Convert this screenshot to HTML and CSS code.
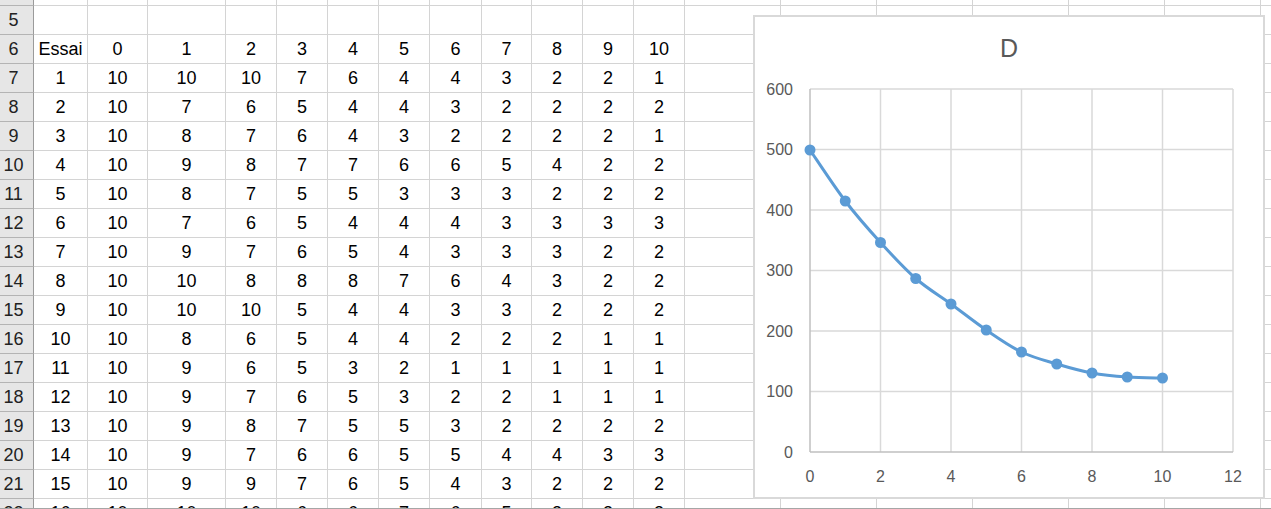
FILE: index.html
```html
<!DOCTYPE html>
<html>
  <head>
    <title>Essais - D</title>
    <link rel="stylesheet" href="styles.css">
  </head>
  <body>
    <div class="sheet">
      <div class="grid">
        <div class="row"><span class="rh"></span><span></span><span></span><span></span><span></span><span></span><span></span><span></span><span></span><span></span><span></span><span></span><span></span><span></span><span></span><span></span><span></span><span></span><span></span><span></span></div>
        <div class="row"><span class="rh">5</span><span></span><span></span><span></span><span></span><span></span><span></span><span></span><span></span><span></span><span></span><span></span><span></span><span></span><span></span><span></span><span></span><span></span><span></span><span></span></div>
        <div class="row"><span class="rh">6</span><span>Essai</span><span>0</span><span>1</span><span>2</span><span>3</span><span>4</span><span>5</span><span>6</span><span>7</span><span>8</span><span>9</span><span>10</span><span></span><span></span><span></span><span></span><span></span><span></span><span></span></div>
        <div class="row"><span class="rh">7</span><span>1</span><span>10</span><span>10</span><span>10</span><span>7</span><span>6</span><span>4</span><span>4</span><span>3</span><span>2</span><span>2</span><span>1</span><span></span><span></span><span></span><span></span><span></span><span></span><span></span></div>
        <div class="row"><span class="rh">8</span><span>2</span><span>10</span><span>7</span><span>6</span><span>5</span><span>4</span><span>4</span><span>3</span><span>2</span><span>2</span><span>2</span><span>2</span><span></span><span></span><span></span><span></span><span></span><span></span><span></span></div>
        <div class="row"><span class="rh">9</span><span>3</span><span>10</span><span>8</span><span>7</span><span>6</span><span>4</span><span>3</span><span>2</span><span>2</span><span>2</span><span>2</span><span>1</span><span></span><span></span><span></span><span></span><span></span><span></span><span></span></div>
        <div class="row"><span class="rh">10</span><span>4</span><span>10</span><span>9</span><span>8</span><span>7</span><span>7</span><span>6</span><span>6</span><span>5</span><span>4</span><span>2</span><span>2</span><span></span><span></span><span></span><span></span><span></span><span></span><span></span></div>
        <div class="row"><span class="rh">11</span><span>5</span><span>10</span><span>8</span><span>7</span><span>5</span><span>5</span><span>3</span><span>3</span><span>3</span><span>2</span><span>2</span><span>2</span><span></span><span></span><span></span><span></span><span></span><span></span><span></span></div>
        <div class="row"><span class="rh">12</span><span>6</span><span>10</span><span>7</span><span>6</span><span>5</span><span>4</span><span>4</span><span>4</span><span>3</span><span>3</span><span>3</span><span>3</span><span></span><span></span><span></span><span></span><span></span><span></span><span></span></div>
        <div class="row"><span class="rh">13</span><span>7</span><span>10</span><span>9</span><span>7</span><span>6</span><span>5</span><span>4</span><span>3</span><span>3</span><span>3</span><span>2</span><span>2</span><span></span><span></span><span></span><span></span><span></span><span></span><span></span></div>
        <div class="row"><span class="rh">14</span><span>8</span><span>10</span><span>10</span><span>8</span><span>8</span><span>8</span><span>7</span><span>6</span><span>4</span><span>3</span><span>2</span><span>2</span><span></span><span></span><span></span><span></span><span></span><span></span><span></span></div>
        <div class="row"><span class="rh">15</span><span>9</span><span>10</span><span>10</span><span>10</span><span>5</span><span>4</span><span>4</span><span>3</span><span>3</span><span>2</span><span>2</span><span>2</span><span></span><span></span><span></span><span></span><span></span><span></span><span></span></div>
        <div class="row"><span class="rh">16</span><span>10</span><span>10</span><span>8</span><span>6</span><span>5</span><span>4</span><span>4</span><span>2</span><span>2</span><span>2</span><span>1</span><span>1</span><span></span><span></span><span></span><span></span><span></span><span></span><span></span></div>
        <div class="row"><span class="rh">17</span><span>11</span><span>10</span><span>9</span><span>6</span><span>5</span><span>3</span><span>2</span><span>1</span><span>1</span><span>1</span><span>1</span><span>1</span><span></span><span></span><span></span><span></span><span></span><span></span><span></span></div>
        <div class="row"><span class="rh">18</span><span>12</span><span>10</span><span>9</span><span>7</span><span>6</span><span>5</span><span>3</span><span>2</span><span>2</span><span>1</span><span>1</span><span>1</span><span></span><span></span><span></span><span></span><span></span><span></span><span></span></div>
        <div class="row"><span class="rh">19</span><span>13</span><span>10</span><span>9</span><span>8</span><span>7</span><span>5</span><span>5</span><span>3</span><span>2</span><span>2</span><span>2</span><span>2</span><span></span><span></span><span></span><span></span><span></span><span></span><span></span></div>
        <div class="row"><span class="rh">20</span><span>14</span><span>10</span><span>9</span><span>7</span><span>6</span><span>6</span><span>5</span><span>5</span><span>4</span><span>4</span><span>3</span><span>3</span><span></span><span></span><span></span><span></span><span></span><span></span><span></span></div>
        <div class="row"><span class="rh">21</span><span>15</span><span>10</span><span>9</span><span>9</span><span>7</span><span>6</span><span>5</span><span>4</span><span>3</span><span>2</span><span>2</span><span>2</span><span></span><span></span><span></span><span></span><span></span><span></span><span></span></div>
        <div class="row"><span class="rh">22</span><span>16</span><span>10</span><span>10</span><span>10</span><span>6</span><span>6</span><span>7</span><span>6</span><span>5</span><span>3</span><span>3</span><span>3</span><span></span><span></span><span></span><span></span><span></span><span></span><span></span></div>
      </div>

      <!-- chart floats over the cells, like an Excel chart object -->
      <div class="chart">
        <svg width="508" height="480" viewBox="755 17 508 480">
          <text class="chart-title" x="1009" y="57">D</text>

          <g class="gridlines">
            <line x1="810" y1="89" x2="1233" y2="89" />
            <line x1="810" y1="149.5" x2="1233" y2="149.5" />
            <line x1="810" y1="210" x2="1233" y2="210" />
            <line x1="810" y1="270.5" x2="1233" y2="270.5" />
            <line x1="810" y1="331" x2="1233" y2="331" />
            <line x1="810" y1="391.5" x2="1233" y2="391.5" />
            <line x1="880.5" y1="89" x2="880.5" y2="452" />
            <line x1="951" y1="89" x2="951" y2="452" />
            <line x1="1021.5" y1="89" x2="1021.5" y2="452" />
            <line x1="1092" y1="89" x2="1092" y2="452" />
            <line x1="1162.5" y1="89" x2="1162.5" y2="452" />
            <line x1="1233" y1="89" x2="1233" y2="452" />
          </g>
          <g class="axes">
            <line x1="810" y1="89" x2="810" y2="452" />
            <line x1="810" y1="452" x2="1233" y2="452" />
          </g>

          <g class="y-labels">
            <text x="793" y="94.8">600</text>
            <text x="793" y="155.3">500</text>
            <text x="793" y="215.8">400</text>
            <text x="793" y="276.3">300</text>
            <text x="793" y="336.8">200</text>
            <text x="793" y="397.3">100</text>
            <text x="793" y="457.8">0</text>
          </g>
          <g class="x-labels">
            <text x="810" y="482">0</text>
            <text x="880.5" y="482">2</text>
            <text x="951" y="482">4</text>
            <text x="1021.5" y="482">6</text>
            <text x="1092" y="482">8</text>
            <text x="1162.5" y="482">10</text>
            <text x="1233" y="482">12</text>
          </g>

          <path class="series" d="M810,150 C815.88,158.5 833.5,185.58 845.25,201 C857,216.42 868.75,229.58 880.5,242.5 C892.25,255.42 904,268.25 915.75,278.5 C927.5,288.75 939.25,295.42 951,304 C962.75,312.58 974.5,322 986.25,330 C998,338 1009.75,346.33 1021.5,352 C1033.25,357.67 1045,360.5 1056.75,364 C1068.5,367.5 1080.25,370.83 1092,373 C1103.75,375.17 1115.5,376.17 1127.25,377 C1139,377.83 1156.63,377.83 1162.5,378" />
          <g class="markers">
            <circle cx="810" cy="150" r="5.5" />
            <circle cx="845.25" cy="201" r="5.5" />
            <circle cx="880.5" cy="242.5" r="5.5" />
            <circle cx="915.75" cy="278.5" r="5.5" />
            <circle cx="951" cy="304" r="5.5" />
            <circle cx="986.25" cy="330" r="5.5" />
            <circle cx="1021.5" cy="352" r="5.5" />
            <circle cx="1056.75" cy="364" r="5.5" />
            <circle cx="1092" cy="373" r="5.5" />
            <circle cx="1127.25" cy="377" r="5.5" />
            <circle cx="1162.5" cy="378" r="5.5" />
          </g>
        </svg>
      </div>
    </div>
  </body>
</html>
```

FILE: styles.css
```css
body {
  margin: 0;
  background-color: #fff;
  font-family: "Liberation Sans", Arial, sans-serif;
  overflow: hidden;
}

.sheet {
  position: relative;
  height: 508px;
  overflow: hidden;
  border-bottom: 1px solid #a6a6a6;
}

.grid {
  margin-top: -23px;
}

.row {
  display: grid;
  grid-template-columns: 34px 54px 60px 78px 51px 51px 51px 51px 52px 50px 51px 51px 51px repeat(7, 96px);
  height: 29px;
}

.row span {
  box-sizing: border-box;
  border-right: 1px solid #d4d4d4;
  border-bottom: 1px solid #d4d4d4;
  font-size: 18px;
  line-height: 28px;
  text-align: center;
  color: #000;
  white-space: nowrap;
}

.row .rh {
  background-color: #e6e6e6;
  border-right-color: #9b9b9b;
  border-bottom-color: #b4b4b4;
  padding-right: 6px;
  color: #222;
}

.chart {
  position: absolute;
  left: 753px;
  top: 15px;
  width: 512px;
  height: 484px;
  box-sizing: border-box;
  border: 2px solid #d9d9d9;
  background-color: #fff;
}

.chart svg {
  display: block;
}

.chart-title {
  font-size: 25px;
  fill: #595959;
  text-anchor: middle;
}

.gridlines line {
  stroke: #d9d9d9;
  stroke-width: 1.5;
}

.axes line {
  stroke: #bfbfbf;
  stroke-width: 1.5;
}

.y-labels text,
.x-labels text {
  font-size: 16px;
  fill: #595959;
}

.y-labels text {
  text-anchor: end;
}

.x-labels text {
  text-anchor: middle;
}

.series {
  fill: none;
  stroke: #5b9bd5;
  stroke-width: 3;
  stroke-linecap: round;
}

.markers circle {
  fill: #5b9bd5;
}
```
